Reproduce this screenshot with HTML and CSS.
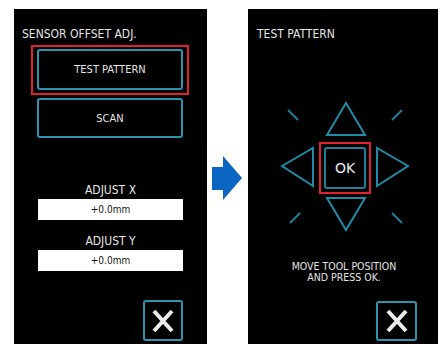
FILE: index.html
```html
<html>
<head>
	<title>Sensor offset adjustment</title>
	<meta http-equiv="Content-Type" content="text/html; charset=utf-8" />
	<link rel="stylesheet" href="styles.css">
</head>
<body>

<div class="stage">

	<div class="panel left">
		<div class="title">SENSOR OFFSET ADJ.</div>

		<div class="mark wide">
			<div class="btn big">TEST PATTERN</div>
		</div>
		<div class="btn big scan">SCAN</div>

		<div class="label first">ADJUST X</div>
		<div class="value">+0.0mm</div>
		<div class="label">ADJUST Y</div>
		<div class="value">+0.0mm</div>

		<div class="close">
			<svg width="22" height="24" viewBox="0 0 22 24"><path d="M2 2 L20 22 M20 2 L2 22" stroke="#ececec" stroke-width="4" /></svg>
		</div>
	</div>

	<div class="gap">
		<svg width="31" height="45" viewBox="0 0 31 45"><path d="M0 11 H11 V0 L30 22 L11 44 V34 H0 Z" fill="#0a66c0" /></svg>
	</div>

	<div class="panel right">
		<div class="title">TEST PATTERN</div>

		<div class="dpad">
			<svg class="cell" viewBox="0 0 38 40"><path d="M7 8 L17 18" class="dash" /></svg>
			<svg class="cell" viewBox="0 0 52 40"><path d="M27 1 L46 33 L8 33 Z" class="tri" /></svg>
			<svg class="cell" viewBox="0 0 38 40"><path d="M21 18 L31 8" class="dash" /></svg>

			<svg class="cell" viewBox="0 0 38 52"><path d="M1 24 L32 6 L32 44 Z" class="tri" /></svg>
			<div class="mark ok-mark">
				<div class="btn ok">OK</div>
			</div>
			<svg class="cell" viewBox="0 0 38 52"><path d="M6 6 L37 24 L6 44 Z" class="tri" /></svg>

			<svg class="cell" viewBox="0 0 38 38"><path d="M9 29 L19 19" class="dash" /></svg>
			<svg class="cell" viewBox="0 0 52 38"><path d="M8 4 L46 4 L27 36 Z" class="tri" /></svg>
			<svg class="cell" viewBox="0 0 38 38"><path d="M21 19 L31 29" class="dash" /></svg>
		</div>

		<div class="hint">MOVE TOOL POSITION<br />AND PRESS OK.</div>

		<div class="close">
			<svg width="22" height="24" viewBox="0 0 22 24"><path d="M2 2 L20 22 M20 2 L2 22" stroke="#ececec" stroke-width="4" /></svg>
		</div>
	</div>

</div>

</body>
</html>
```
FILE: styles.css
```css
html, body {
	margin: 0;
	background: #ffffff;
}

.stage {
	display: flex;
	height: 344px;
	padding: 9px 0 0 14px;
	box-sizing: border-box;
	font-family: "DejaVu Sans Condensed", "DejaVu Sans", sans-serif;
	color: #e4e4e4;
}

.panel {
	display: flex;
	flex-direction: column;
	background: #000000;
	padding-top: 18px;
	box-sizing: border-box;
}

.panel.left {
	width: 193px;
}

.panel.right {
	width: 190px;
}

.title {
	font-size: 12px;
	line-height: 14px;
	padding-left: 8px;
}

.right .title {
	padding-left: 9px;
}

.gap {
	width: 41px;
	padding: 147px 0 0 5px;
	box-sizing: border-box;
}

/* red highlight frame */
.mark {
	border: 2px solid #e2222a;
	box-sizing: border-box;
}

.mark.wide {
	width: 158px;
	height: 50px;
	margin: 4px 0 0 17px;
	padding: 2px 4px 3px 4px;
}

.btn {
	display: flex;
	align-items: center;
	justify-content: center;
	border: 2px solid #2c93b1;
	border-radius: 3px;
	box-sizing: border-box;
}

.btn.big {
	width: 146px;
	height: 41px;
	font-size: 11px;
}

.btn.scan {
	height: 40px;
	margin: 3px 0 0 23px;
}

.label {
	font-size: 12px;
	line-height: 14px;
	text-align: center;
	margin-top: 14px;
	height: 16px;
}

.label.first {
	margin-top: 45px;
}

.value {
	width: 145px;
	height: 21px;
	margin-left: 24px;
	background: #ffffff;
	color: #111111;
	font-size: 10px;
	line-height: 21px;
	text-align: center;
}

.close {
	display: flex;
	align-items: center;
	justify-content: center;
	width: 40px;
	height: 41px;
	margin-top: auto;
	margin-bottom: 3px;
	align-self: flex-end;
	border: 2px solid #2c93b1;
	border-radius: 3px;
	box-sizing: border-box;
}

.left .close {
	margin-right: 24px;
}

.right .close {
	margin-right: 21px;
	width: 41px;
	height: 40px;
}

/* direction pad */
.dpad {
	display: grid;
	grid-template-columns: 38px 52px 38px;
	grid-template-rows: 40px 52px 38px;
	margin: 61px 0 0 33px;
}

.cell {
	width: 100%;
	height: 100%;
	overflow: visible;
}

.tri {
	fill: none;
	stroke: #1f8ba6;
	stroke-width: 2;
	stroke-linejoin: miter;
}

.dash {
	stroke: #1f7f99;
	stroke-width: 2;
}

.mark.ok-mark {
	width: 52px;
	height: 52px;
	padding: 3px;
}

.btn.ok {
	width: 42px;
	height: 42px;
	font-family: "DejaVu Sans", sans-serif;
	font-size: 14px;
	color: #f0f0f0;
	border-color: #1f7f99;
}

.hint {
	font-size: 10.5px;
	line-height: 11px;
	text-align: center;
	margin: 29px 0 0 2px;
}
```
